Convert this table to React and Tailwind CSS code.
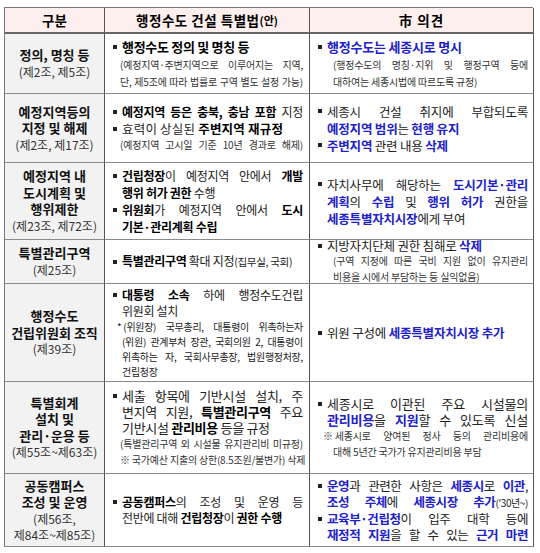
import React from "react";
import clsx from "clsx";

// one printed line; j = stretched to the full width like the source document
function L({ j, className, children }) {
  return (
    <div
      className={clsx(
        "whitespace-nowrap",
        j && "text-justify [text-align-last:justify]",
        className
      )}
    >
      {children}
    </div>
  );
}

function Bu({ j, className, children }) {
  return (
    <div className={clsx("flex items-center", className)}>
      <span className="mr-[5px] h-[4px] w-[4px] shrink-0 bg-[#222]" />
      <L j={j} className="min-w-0 flex-1">
        {children}
      </L>
    </div>
  );
}

const K = ({ children }) => <span className="font-bold text-black">{children}</span>;
const U = ({ children }) => <span className="font-bold text-[#2121c9]">{children}</span>;
// keeps a few words together so the justify gap doesn't land inside them
const Tie = ({ children }) => <span className="inline-block">{children}</span>;

function Label({ lines, refs }) {
  return (
    <div className="flex flex-col items-center justify-center border-b border-r border-b-[#8a8a8a] border-r-[#555] bg-[#f2f2f2] text-center">
      {lines.map((t) => (
        <div key={t} className="whitespace-nowrap text-[13px] font-bold leading-[16.5px] text-[#111]">
          {t}
        </div>
      ))}
      {refs.map((t) => (
        <div key={t} className="whitespace-nowrap text-[12px] leading-[16px] text-[#333]">
          {t}
        </div>
      ))}
    </div>
  );
}

function Mid({ className, children }) {
  return (
    <div
      className={clsx(
        "flex flex-col justify-center border-b border-r border-b-[#8a8a8a] border-r-[#555] pl-[8px] pr-[6px] text-[12px] leading-[16px] tracking-[-0.3px] text-[#222]",
        className
      )}
    >
      {children}
    </div>
  );
}

function Opn({ className, children }) {
  return (
    <div
      className={clsx(
        "flex flex-col justify-center border-b border-r border-b-[#8a8a8a] border-r-[#555] pl-[8px] pr-[5px] text-[12.5px] leading-[16px] tracking-[-0.2px] text-[#222]",
        className
      )}
    >
      {children}
    </div>
  );
}

const note = "text-[10px] leading-[16px] tracking-[-0.2px] text-[#333]";

export default function App() {
  return (
    <div className="min-h-[553px] bg-white pl-[4px] pt-[7px] font-['Noto_Sans_CJK_KR','Noto_Sans',sans-serif]">
      <div className="grid w-[529px] grid-cols-[100px_205px_224px] grid-rows-[26px_60px_69px_77px_44px_98px_92px_73px] border-l border-t border-[#777]">
        {/* header */}
        <div className="flex items-center justify-center border-b-2 border-r border-b-[#666] border-r-[#555] bg-[#fcefee] text-[13.5px] font-bold">
          구분
        </div>
        <div className="flex items-center justify-center border-b-2 border-r border-b-[#666] border-r-[#555] bg-[#fcefee] text-[13.5px] font-bold tracking-[0.5px]">
          행정수도 건설 특별법<span className="text-[11px] tracking-normal">(안)</span>
        </div>
        <div className="flex items-center justify-center border-b-2 border-r border-b-[#666] border-r-[#555] bg-[#fcefee] text-[13.5px] font-bold tracking-[1px]">
          市 의견
        </div>

        {/* 정의, 명칭 */}
        <Label lines={["정의, 명칭 등"]} refs={["(제2조, 제5조)"]} />
        <Mid>
          <Bu className="text-[13px] leading-[18px]">
            <K>행정수도 정의 및 명칭 등</K>
          </Bu>
          <L j className={clsx(note, "ml-[7px] leading-[17px]")}>
            (예정지역·주변지역으로 이루어지는 지역,
          </L>
          <L j className={clsx(note, "ml-[7px] leading-[17px]")}>
            단, 제5조에 따라 법률로 구역 별도 설정 가능)
          </L>
        </Mid>
        <Opn>
          <Bu className="text-[13px] leading-[18px]">
            <U>행정수도는 세종시로 명시</U>
          </Bu>
          <L j className={clsx(note, "ml-[15px] leading-[17px]")}>
            (행정수도의 명칭·지위 및 행정구역 등에
          </L>
          <L className={clsx(note, "ml-[15px] leading-[17px]")}>
            대하여는 세종시법에 따르도록 규정)
          </L>
        </Opn>

        {/* 예정지역 지정 */}
        <Label lines={["예정지역등의", "지정 및 해제"]} refs={["(제2조, 제17조)"]} />
        <Mid>
          <Bu j className="leading-[17px]">
            <K>예정지역 등은 충북, 충남 포함</K> 지정
          </Bu>
          <Bu className="text-[12.5px] leading-[17px] tracking-[0.2px]">
            효력이 상실된 <K>주변지역 재규정</K>
          </Bu>
          <L j className={clsx(note, "ml-[7px]")}>
            (예정지역 고시일 기준 10년 경과로 해제)
          </L>
        </Mid>
        <Opn>
          <Bu j className="leading-[17px]">세종시 건설 취지에 부합되도록</Bu>
          <L className="ml-[9px] leading-[17px]">
            <U>예정지역 범위</U>는 <U>현행 유지</U>
          </L>
          <Bu className="leading-[17px]">
            <U>주변지역</U> 관련 내용 <U>삭제</U>
          </Bu>
        </Opn>

        {/* 도시계획 */}
        <Label lines={["예정지역 내", "도시계획 및", "행위제한"]} refs={["(제23조, 제72조)"]} />
        <Mid className="leading-[17px]">
          <Bu j>
            <K>건립청장</K>이 예정지역 안에서 <K>개발</K>
          </Bu>
          <L className="ml-[9px]">
            <K>행위 허가 권한</K> 수행
          </L>
          <Bu j>
            <K>위원회</K>가 예정지역 안에서 <K>도시</K>
          </Bu>
          <L className="ml-[9px]">
            <K>기본·관리계획 수립</K>
          </L>
        </Mid>
        <Opn className="leading-[17px]">
          <Bu j>
            자치사무에 해당하는 <U>도시기본·관리</U>
          </Bu>
          <L j className="ml-[9px]">
            <U>계획</U>의 <U>수립</U> 및 <U>행위 허가</U> 권한을
          </L>
          <L className="ml-[9px]">
            <U>세종특별자치시장</U>에게 부여
          </L>
        </Opn>

        {/* 특별관리구역 */}
        <Label lines={["특별관리구역"]} refs={["(제25조)"]} />
        <Mid>
          <Bu>
            <K>특별관리구역</K> 확대 지정<span className="text-[10.5px]">(집무실, 국회)</span>
          </Bu>
        </Mid>
        <Opn>
          <Bu className="leading-[15px]">
            지방자치단체 권한 침해로 <U>삭제</U>
          </Bu>
          <L j className={clsx(note, "ml-[15px] leading-[13px]")}>
            (구역 지정에 따른 국비 지원 없이 유지관리
          </L>
          <L className={clsx(note, "ml-[15px] leading-[13px]")}>
            비용을 시에서 부담하는 등 실익없음)
          </L>
        </Opn>

        {/* 건립위원회 */}
        <Label lines={["행정수도", "건립위원회 조직"]} refs={["(제39조)"]} />
        <Mid className="leading-[15px]">
          <Bu j>
            <K>대통령 소속</K> 하에 행정수도건립
          </Bu>
          <L className="ml-[9px]">위원회 설치</L>
          <L j className="ml-[4px] text-[10px] leading-[15px]">
            <Tie>* (위원장)</Tie> 국무총리, 대통령이 위촉하는자
          </L>
          <L j className="ml-[9px] text-[10px] leading-[15px]">
            (위원) 관계부처 장관, 국회의원 2, 대통령이
          </L>
          <L j className="ml-[9px] text-[10px] leading-[15px]">
            위촉하는 자, 국회사무총장, 법원행정처장,
          </L>
          <L className="ml-[9px] text-[10px] leading-[15px]">건립청장</L>
        </Mid>
        <Opn>
          <Bu>
            위원 구성에 <U>세종특별자치시장 추가</U>
          </Bu>
        </Opn>

        {/* 특별회계 */}
        <Label lines={["특별회계", "설치 및", "관리·운용 등"]} refs={["(제55조~제63조)"]} />
        <Mid className="text-[13px] leading-[16px]">
          <Bu j>세출 항목에 기반시설 설치, 주</Bu>
          <L j className="ml-[9px]">
            변지역 지원, <K>특별관리구역</K> 주요
          </L>
          <L className="ml-[9px]">
            기반시설 <K>관리비용</K> 등을 규정
          </L>
          <L j className={clsx(note, "ml-[7px] leading-[15px]")}>
            (특별관리구역 외 시설물 유지관리비 미규정)
          </L>
          <L className={clsx(note, "ml-[7px] leading-[15px]")}>
            ※ 국가예산 지출의 상한(8.5조원/불변가) 삭제
          </L>
        </Mid>
        <Opn className="text-[13px] leading-[16px]">
          <Bu j>세종시로 이관된 주요 시설물의</Bu>
          <L j className="ml-[9px]">
            <U>관리비용</U>을 <U>지원</U>할 수 있도록 신설
          </L>
          <L j className={clsx(note, "ml-[5px] leading-[14px]")}>
            <Tie>※ 세종시로</Tie> 양여된 정사 등의 관리비용에
          </L>
          <L className={clsx(note, "ml-[15px] leading-[14px]")}>
            대해 5년간 국가가 유지관리비용 부담
          </L>
        </Opn>

        {/* 공동캠퍼스 */}
        <Label lines={["공동캠퍼스", "조성 및 운영"]} refs={["(제56조,", "제84조~제85조)"]} />
        <Mid className="leading-[15px]">
          <Bu j>
            <K>공동캠퍼스</K>의 조성 및 운영 등
          </Bu>
          <L className="ml-[9px]">
            전반에 대해 <K>건립청장</K>이 <K>권한 수행</K>
          </L>
        </Mid>
        <Opn className="text-[12.5px] leading-[15px] tracking-[-0.4px]">
          <Bu j>
            <U>운영</U>과 관련한 사항은 <U>세종시</U>로 <U>이관</U>,
          </Bu>
          <L j className="ml-[9px]">
            <U>조성 주체</U>에 <U>세종시장</U>{" "}
            <Tie>
              <U>추가</U>
              <span className="text-[10px] font-normal">('30년~)</span>
            </Tie>
          </L>
          <Bu j>
            <U>교육부·건립청</U>이 입주 대학 등에
          </Bu>
          <L j className="ml-[9px]">
            <U>재정적 지원</U>을 할 수 있는 <U>근거 마련</U>
          </L>
        </Opn>
      </div>
    </div>
  );
}
